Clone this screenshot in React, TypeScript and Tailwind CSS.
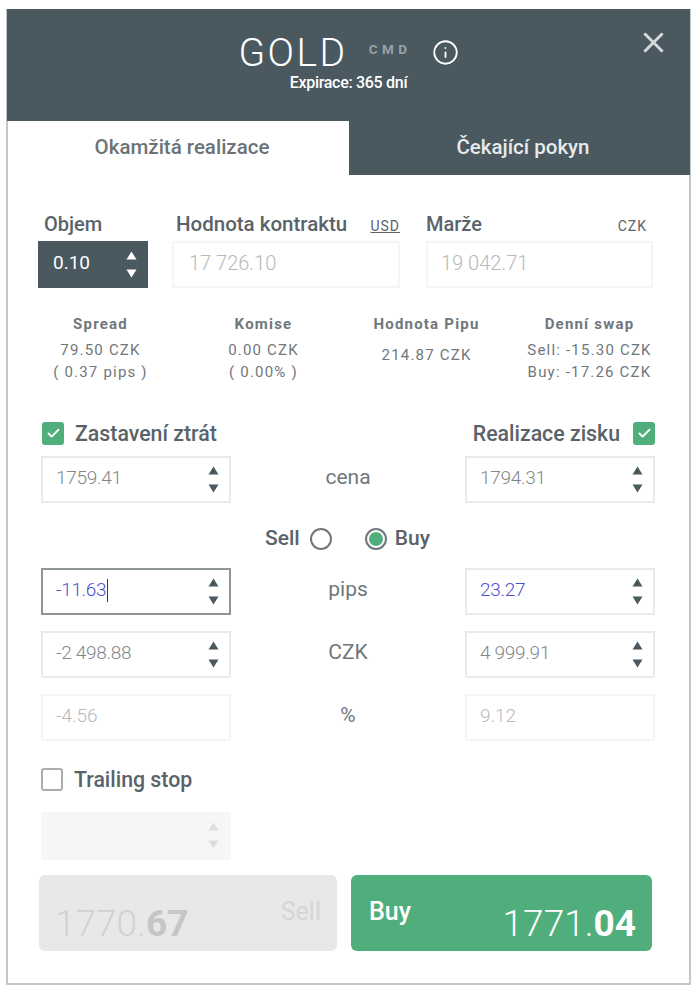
import React from 'react';
import { X, Info, Check } from 'lucide-react';

const Arrows: React.FC<{ className?: string }> = ({ className = 'top-[8px] right-[10px] text-[#4a5860]' }) => (
    <div className={`absolute flex flex-col gap-[9px] ${className}`}>
        <svg width="11" height="9" viewBox="0 0 11 9" className="fill-current"><path d="M5.5 0.5L10.5 8.5H0.5z" /></svg>
        <svg width="11" height="9" viewBox="0 0 11 9" className="fill-current"><path d="M0.5 0.5H10.5L5.5 8.5z" /></svg>
    </div>
);

const Spin: React.FC<{ value: string; blue?: boolean; focused?: boolean }> = ({ value, blue, focused }) => (
    <div className={`relative h-[47px] w-[190px] shrink-0 bg-white border-2 flex items-center pl-[13px] text-[19px] tracking-[-0.3px] ${focused ? 'border-[#8d9599]' : 'border-[#e9eaeb]'} ${blue ? 'text-[#4a4fd0]' : 'text-[#80878c]'}`}>
        <span className="font-light pb-[3px]">{value}</span>
        {focused && <span className="w-px h-[23px] bg-[#2a2fb0] ml-px mb-[3px]" />}
        <Arrows />
    </div>
);

const ReadOnly: React.FC<{ value: string; className?: string }> = ({ value, className = 'w-[190px] h-[47px] pl-[13px] text-[19px] pb-[2px]' }) => (
    <div className={`border-2 border-[#f5f5f6] flex items-center font-light text-[#b4b9bc] shrink-0 ${className}`}>{value}</div>
);

const CheckBox: React.FC = () => (
    <span className="w-[22px] h-[23px] rounded-[3px] bg-[#4fae7b] flex items-center justify-center">
        <Check className="w-[15px] h-[15px] text-white" strokeWidth={3} />
    </span>
);

const Stat: React.FC<{ title: string; lines: string[]; single?: boolean }> = ({ title, lines, single }) => (
    <div className="w-[163px] shrink-0 flex flex-col items-center text-[#70777c] tracking-[1.2px]">
        <div className="text-[15px] font-bold leading-[20px] whitespace-nowrap">{title}</div>
        <div className={`text-[15px] leading-[22px] ${single ? 'mt-[10px]' : 'mt-[5px]'}`}>
            {lines.map(l => <div key={l} className="text-center whitespace-nowrap">{l}</div>)}
        </div>
    </div>
);

const Row: React.FC<{ label: string; left: React.ReactNode; right: React.ReactNode; className?: string }> = ({ label, left, right, className = '' }) => (
    <div className={`flex items-center ${className}`}>
        {left}
        <div className="w-[234px] shrink-0 text-center text-[21px] text-[#70777c] pb-[4px]">{label}</div>
        {right}
    </div>
);

export default function App() {
    return (
        <div className="w-[700px] h-[993px] bg-white pt-[9px] pl-[6px] font-['Roboto',sans-serif]">
            <div className="w-[685px] h-[976px] border-x-2 border-b-2 border-[#c4c7c9] bg-white">
                <div className="relative h-[112px] bg-[#4a5860] -mx-[1px] text-white">
                    <div className="flex items-center justify-center pt-[20px] h-[66px]">
                        <span className="text-[39px] font-light tracking-[2.5px] leading-[46px] pt-[1px]">GOLD</span>
                        <span className="ml-[21px] mb-[6px] text-[13.5px] font-bold tracking-[4.5px] text-[#98a2a8]">CMD</span>
                        <Info className="ml-[20px] w-[27px] h-[27px]" strokeWidth={1.6} />
                    </div>
                    <div className="text-center text-[16px] font-medium tracking-[-0.3px] leading-[16px]">Expirace: 365 dní</div>
                    <X className="absolute right-[20px] top-[17px] w-[33px] h-[33px] text-[#d5d9db]" strokeWidth={2.2} />
                </div>

                <div className="flex h-[54px] -mr-[1px]">
                    <div className="w-[341px] bg-white flex items-center justify-center text-[20.5px] font-medium text-[#6b7378] pb-[2px] pl-[7px]">Okamžitá realizace</div>
                    <div className="flex-1 bg-[#4a5860] flex items-center justify-center text-[20.5px] font-medium text-[#e8eaeb] pb-[2px] pl-[7px]">Čekající pokyn</div>
                </div>

                <div className="pt-[37px] pl-[31px] pr-[33px]">
                    <div className="flex -ml-[1px]">
                        <div className="w-[134px]">
                            <div className="pl-[6px] h-[29px] text-[20px] font-medium text-[#5a6369] leading-[25px]">Objem</div>
                            <div className="relative h-[47px] w-[110px] bg-[#4a5860] flex items-center pl-[15px] text-[19px] text-white">
                                <span className="pb-[3px]">0.10</span>
                                <Arrows className="top-[10px] right-[11px] text-white" />
                            </div>
                        </div>
                        <div className="w-[254px]">
                            <div className="flex justify-between items-baseline w-[228px] pl-[4px] h-[29px] leading-[25px]">
                                <span className="text-[20.5px] font-medium text-[#5a6369] whitespace-nowrap">Hodnota kontraktu</span>
                                <span className="text-[14px] text-[#5a6369] underline tracking-[1px]">USD</span>
                            </div>
                            <ReadOnly value="17 726.10" className="w-[228px] h-[47px] pl-[15px] text-[20px] pb-[4px]" />
                        </div>
                        <div className="w-[227px]">
                            <div className="flex justify-between items-baseline h-[29px] leading-[25px] pr-[6px]">
                                <span className="text-[20px] font-medium text-[#5a6369]">Marže</span>
                                <span className="text-[14px] text-[#5a6369] tracking-[1px]">CZK</span>
                            </div>
                            <ReadOnly value="19 042.71" className="w-[227px] h-[47px] pl-[13px] text-[20px] pb-[4px]" />
                        </div>
                    </div>

                    <div className="flex mt-[26px] -ml-[20px]">
                        <Stat title="Spread" lines={['79.50 CZK', '( 0.37 pips )']} />
                        <Stat title="Komise" lines={['0.00 CZK', '( 0.00% )']} />
                        <Stat title="Hodnota Pipu" lines={['214.87 CZK']} single />
                        <Stat title="Denní swap" lines={['Sell: -15.30 CZK', 'Buy: -17.26 CZK']} />
                    </div>

                    <div className="flex items-center justify-between mt-[39px] h-[23px] pl-[3px]">
                        <div className="flex items-center gap-[11px]">
                            <CheckBox />
                            <span className="text-[21.3px] font-medium text-[#5a6369]">Zastavení ztrát</span>
                        </div>
                        <div className="flex items-center gap-[13px] mr-[1px]">
                            <span className="text-[21.3px] font-medium text-[#5a6369]">Realizace zisku</span>
                            <CheckBox />
                        </div>
                    </div>

                    <Row className="mt-[11px] ml-[2px]" label="cena" left={<Spin value="1759.41" />} right={<Spin value="1794.31" />} />

                    <div className="flex items-center justify-center h-[65px] pt-[7px] text-[21px] font-medium text-[#5a6369]">
                        <span>Sell</span>
                        <span className="ml-[10px] w-[22px] h-[22px] rounded-full border-2 border-[#70777c]" />
                        <span className="ml-[33px] w-[22px] h-[22px] rounded-full border-2 border-[#70777c] flex items-center justify-center">
                            <span className="w-[14px] h-[14px] rounded-full bg-[#4fae7b]" />
                        </span>
                        <span className="ml-[8px]">Buy</span>
                    </div>

                    <Row className="ml-[2px]" label="pips" left={<Spin value="-11.63" blue focused />} right={<Spin value="23.27" blue />} />
                    <Row className="mt-[16px] ml-[2px]" label="CZK" left={<Spin value="-2 498.88" />} right={<Spin value="4 999.91" />} />
                    <Row className="mt-[16px] ml-[2px]" label="%" left={<ReadOnly value="-4.56" />} right={<ReadOnly value="9.12" />} />

                    <div className="flex items-center mt-[27px] ml-[2px] h-[23px]">
                        <span className="w-[22px] h-[23px] rounded-[3px] border-2 border-[#a8adb0] bg-white" />
                        <span className="ml-[11px] text-[21.3px] font-medium text-[#5a6369]">Trailing stop</span>
                    </div>

                    <div className="relative mt-[21px] ml-[2px] w-[190px] h-[48px] bg-[#f6f6f6]">
                        <Arrows className="top-[10px] right-[12px] text-[#dcdedf]" />
                    </div>

                    <div className="flex gap-[14px] mt-[15px]">
                        <div className="w-[298px] h-[76px] shrink-0 rounded-[6px] bg-[#e8e8e8] flex justify-between pl-[16px] pr-[16px]">
                            <span className="self-end pb-[5px] text-[37px] font-light text-[#d0d2d3] leading-[44px]">1770.<b className="font-bold text-[#c4c6c7]">67</b></span>
                            <span className="pt-[20px] text-[25px] text-[#d4d6d7] leading-[34px]">Sell</span>
                        </div>
                        <div className="w-[301px] h-[76px] shrink-0 rounded-[6px] bg-[#4fae7b] flex justify-between pl-[18px] pr-[16px] text-white">
                            <span className="pt-[20px] text-[25px] font-medium leading-[34px]">Buy</span>
                            <span className="self-end pb-[5px] text-[37px] font-light leading-[44px]">1771.<b className="font-bold">04</b></span>
                        </div>
                    </div>
                </div>
            </div>
        </div>
    );
}
